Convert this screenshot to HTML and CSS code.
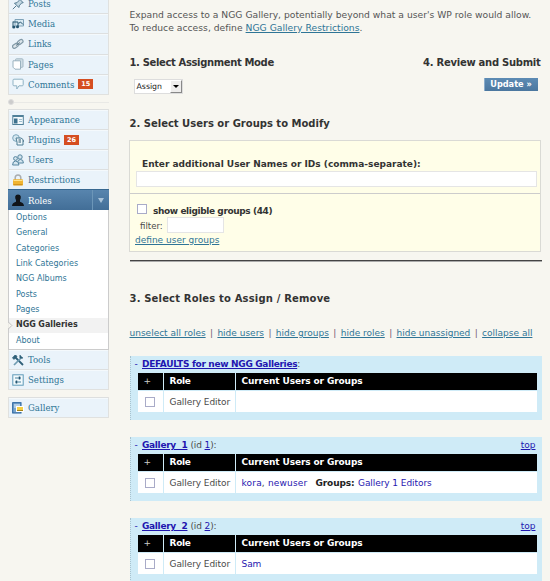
FILE: index.html
```html
<!DOCTYPE html>
<html lang="en">
<head>
<meta charset="utf-8">
<title>NGG Gallery Roles</title>
<link rel="stylesheet" href="styles.css">
</head>
<body>
<div class="page">
<aside class="sidebar">
  <ul class="menu menu-content">
    <li><svg viewBox="0 0 12 12"><path d="M.8 11.200L4 8" stroke="#52798f"/><path d="M2.500 5.200l4.300 4.300.7-2.300L9.800 5l1.400-.3L7.500 1l-.4 1.400L5 4.700z" fill="#c3d8e3" stroke="#52798f"/></svg>Posts</li>
    <li><svg viewBox="0 0 12 12"><path d="M3 1.500h8.500v6.500H3z" fill="#d8e9f2" stroke="#7fa3b8"/><path d="M1 3.500v5M1 4h5v4.500M6.500 5.500l2-1.500 2.500 2.500" fill="none" stroke="#24546f"/><circle cx="1.800" cy="9" r="1.600" fill="#24546f"/><circle cx="5.500" cy="8.800" r="1.500" fill="#24546f"/></svg>Media</li>
    <li><svg viewBox="0 0 12 12"><g fill="#dce5ea" stroke="#8199a7" stroke-width="1.200"><rect x=".5" y="6" width="6" height="3.600" rx="1.800" transform="rotate(-35 3.500 8)"/><rect x="5.200" y="2.200" width="6" height="3.600" rx="1.800" transform="rotate(-35 8.200 4)"/></g><path d="M4 7.500l4-3" stroke="#607d8d"/></svg>Links</li>
    <li><svg viewBox="0 0 12 12"><rect x="3.500" y=".8" width="7.500" height="8.500" rx="1" fill="#cfdde5" stroke="#a3b8c4"/><path d="M1 2.800h7.500v8.400H3L1 9.200z" fill="#fff" stroke="#9ab2bf"/></svg>Pages</li>
    <li><svg viewBox="0 0 12 12"><path d="M2 1.200h8.200q1 0 1 1v4.600q0 1-1 1H7L4.800 11V7.800H2q-1 0-1-1V2.200q0-1 1-1z" fill="#f5fafc" stroke="#8fb2c4"/></svg>Comments<b class="count">15</b></li>
  </ul>
  <div class="separator"><i></i></div>
  <ul class="menu">
    <li><svg viewBox="0 0 12 12"><rect x=".8" y="1.500" width="10.500" height="9" fill="#f3f9fc" stroke="#4f8099"/><path d="M1 2.500h10" stroke="#4f8099"/><path d="M2 4.500h3.500v5H2z" fill="#3c718e"/><path d="M7 5.500h3M7 7.500h3" stroke="#9fc0d0"/></svg>Appearance</li>
    <li><svg viewBox="0 0 12 12"><circle cx="4" cy="4" r="3.300" fill="#d5e8f1" stroke="#7ba5ba"/><path d="M4 4h5l2 1.500v5.500H5V8z" fill="#edf6fa" stroke="#4d7c94"/><path d="M6.500 6h2.500M6.500 8h2.500M11 7h1" stroke="#28566f"/></svg>Plugins<b class="count">26</b></li>
    <li><svg viewBox="0 0 12 12"><g fill="#d4e5ef" stroke="#5686a0"><circle cx="8" cy="3" r="2.200"/><path d="M5.500 9q0-3.500 3-3.500t2.900 3.500z"/><circle cx="3.500" cy="4.500" r="1.900"/><path d="M.6 11q0-4 3-4t3.400 4z"/></g></svg>Users</li>
    <li><svg viewBox="0 0 12 12"><path d="M3.200 6V3.700a2.800 2.800 0 0 1 5.600 0V6" fill="none" stroke="#a9adaf" stroke-width="1.500"/><rect x="1" y="5.300" width="10" height="6.200" rx=".8" fill="#f0b431"/><path d="M1.500 6.500h9" stroke="#ffe28a"/><path d="M1.500 10.700h9" stroke="#c98a1b"/></svg>Restrictions</li>
    <li class="current"><svg viewBox="0 0 12 12"><path d="M0 12q.2-3.300 4-4.300V6Q3 4.500 3.200 2.500 3.500.5 6 .5t2.800 2Q9 4.500 8 6v1.700q3.800 1 4 4.300z" fill="#101419"/></svg>Roles<span class="toggle"></span></li>
  </ul>
  <ul class="submenu">
    <li>Options</li><li>General</li><li>Categories</li><li>Link Categories</li><li>NGG Albums</li><li>Posts</li><li>Pages</li><li class="selected"><svg viewBox="0 0 5 10"><path d="M0 1l4 4-4 4" fill="#f7f6f0" stroke="#bbb"/></svg>NGG Galleries</li><li>About</li>
  </ul>
  <ul class="menu menu-tail">
    <li><svg viewBox="0 0 12 12"><path d="M2 2l9 9" stroke="#2f6079" stroke-width="1.800"/><path d="M10 3L2 11" stroke="#6f9cb2" stroke-width="1.700"/><path d="M.5 4l3-3L5 2.500 2 5.300zM8 1v3h3" fill="#2f6079" stroke="#2f6079"/></svg>Tools</li>
    <li><svg viewBox="0 0 12 12"><rect x=".8" y=".8" width="10.400" height="10.400" fill="#f3fafd" stroke="#5e9ab8"/><path d="M3 4h6M3 8h6" stroke="#47819e"/><path d="M7.500 2.500v3M4.500 6.500v3" stroke="#24546f" stroke-width="1.500"/></svg>Settings</li>
  </ul>
  <ul class="menu menu-gallery">
    <li><svg viewBox="0 0 12 12"><rect x=".7" y=".7" width="8.300" height="10.300" fill="#7aa6ce" stroke="#1f5c99"/><path d="M2 3h6M2 5h3" stroke="#eef6fb"/><rect x="4.500" y="4.500" width="7" height="5" fill="#f4cf45" stroke="#fff"/><path d="M5 8.500h6" stroke="#a78316"/></svg>Gallery</li>
  </ul>
</aside>

<main class="main">
  <p class="intro">Expand access to a NGG Gallery, potentially beyond what a user's WP role would allow.<br><span class="reduce">To reduce access, define <a>NGG Gallery Restrictions</a>.</span></p>
  <div class="steps">
    <div><h3 class="h-mode">1. Select Assignment Mode</h3><div class="select"><span>Assign</span><i></i></div></div>
    <div class="review"><h3 class="h-review">4. Review and Submit</h3><button>Update »</button></div>
  </div>
  <h3 class="h-users">2. Select Users or Groups to Modify</h3>
  <section class="picker">
    <div class="names"><label>Enter additional User Names or IDs (comma-separate):</label><div class="field"></div></div>
    <div class="groups">
      <div class="eligible"><i class="check"></i><b>show eligible groups (44)</b></div>
      <div class="filter"><span>filter:</span><div class="field"></div></div>
      <a>define user groups</a>
    </div>
  </section>
  <hr>
  <h3 class="h-roles">3. Select Roles to Assign / Remove</h3>
  <nav><a>unselect all roles</a><i>|</i><a>hide users</a><i>|</i><a>hide groups</a><i>|</i><a>hide roles</a><i>|</i><a>hide unassigned</a><i>|</i><a>collapse all</a></nav>

  <section class="gallery">
    <header><span class="dash">-</span><a class="name">DEFAULTS for new NGG Galleries</a>:</header>
    <div class="grid">
      <div class="th plus">+</div><div class="th">Role</div><div class="th wide">Current Users or Groups</div>
      <div class="td pick"><i class="check"></i></div><div class="td">Gallery Editor</div><div class="td"></div>
    </div>
  </section>
  <section class="gallery">
    <header><span class="dash">-</span><a class="name">Gallery&nbsp; 1</a><span class="id">(id <a>1</a>):</span><a class="top">top</a></header>
    <div class="grid">
      <div class="th plus">+</div><div class="th">Role</div><div class="th wide">Current Users or Groups</div>
      <div class="td pick"><i class="check"></i></div><div class="td">Gallery Editor</div><div class="td people"><span class="users"><em>kora</em>, <em>newuser</em></span><b>Groups:</b><em>Gallery 1 Editors</em></div>
    </div>
  </section>
  <section class="gallery">
    <header><span class="dash">-</span><a class="name">Gallery&nbsp; 2</a><span class="id">(id <a>2</a>):</span><a class="top">top</a></header>
    <div class="grid">
      <div class="th plus">+</div><div class="th">Role</div><div class="th wide">Current Users or Groups</div>
      <div class="td pick"><i class="check"></i></div><div class="td">Gallery Editor</div><div class="td people"><em>Sam</em></div>
    </div>
  </section>
</main>
</div>
</body>
</html>
```
FILE: styles.css
```css
* { box-sizing: border-box; }
body { margin: 0; background: #f7f6f0; color: #4a4a4a; font: 9px/12px "DejaVu Sans", sans-serif; }
ul { list-style: none; margin: 0; padding: 0; }
i, em { font-style: normal; }
svg { display: block; flex: none; }
.page { display: flex; width: 550px; height: 581px; overflow: hidden; }

.sidebar { width: 101px; margin-left: 8px; flex: none; }
.menu { border: 1px solid #e0e1df; border-top: 0; font: 9.5px/19px "DejaVu Serif Condensed", "DejaVu Serif", serif; color: #2f7596; }
.menu li { display: flex; align-items: center; height: 20px; background: #eaf3fa; border-top: 1px solid #dddfdf; padding-left: 3px; box-shadow: inset 0 1px #f4f9fc; }
.menu svg { width: 12px; height: 12px; margin-right: 4px; }
.menu-content { margin-top: -7px; height: 102px; }
.menu-content li { height: 20.2px; }
.count { width: 15px; height: 10px; margin-left: 4px; background: #d54e21; color: #fff; font: bold 6.5px/10px "DejaVu Sans", sans-serif; text-align: center; }
.separator { display: flex; align-items: center; height: 14px; }
.separator::after { content: ""; flex: 1; height: 1px; background: #e9e9e6; }
.separator i { width: 6px; height: 6px; border-radius: 3px; background: #ccc; border: 1px solid #ddd; }
.menu .current { height: 21px; margin: 0 -1px -1px; padding-left: 4px; background: linear-gradient(#5885ae, #426e97); color: #fff; border-top: 1px solid #36678f; box-shadow: none; }
.toggle { display: flex; align-items: center; justify-content: center; width: 17px; height: 20px; margin-left: auto; border-left: 1px solid #6c96b8; }
.toggle::after { content: ""; border: 3px solid transparent; border-top: 5px solid #a9c3d9; border-bottom: 0; }
.submenu { height: 140px; padding-top: .5px; border: 1px solid #ccc; border-top: 0; background: #fff; font-size: 8px; color: #2f7596; }
.submenu li { display: flex; align-items: center; height: 15.33px; padding-left: 7px; }
.submenu .selected { background: #f2f2f2; color: #333; font-weight: bold; letter-spacing: -.06px; padding-left: 0; }
.submenu svg { width: 5px; height: 9px; margin: 0 3px 0 -1px; }
.menu-tail li { height: 20px; }
.menu-tail li:first-child { height: 19px; border-top: 0; }
.menu-gallery { margin-top: 7px; }

.main { width: 412px; margin-left: 20.5px; flex: none; }
a { color: #2f7596; text-decoration: underline; }
.intro { margin: 9px 0 0; height: 26px; font-size: 9.2px; line-height: 12.8px; white-space: nowrap; color: #555; }
.reduce { letter-spacing: .02px; }
h3 { margin: 0; font-size: 10px; line-height: 14px; color: #333; white-space: nowrap; }
.steps { display: flex; justify-content: space-between; margin-top: 21px; height: 61px; }
.h-mode { letter-spacing: -.36px; }
.h-review { letter-spacing: -.27px; margin-right: 1px; }
.h-roles { letter-spacing: .17px; }
.select { display: flex; align-items: center; justify-content: space-between; width: 49px; height: 15px; margin: 9px 0 0 4px; padding: 0 0 0 2px; background: #fff; border: 1px solid #ddd; font-size: 7.8px; color: #222; }
.select i { width: 12px; height: 13px; background: #eeedec; border: 1px solid #fff; border-right-color: #888; border-bottom-color: #888; display: flex; align-items: center; justify-content: center; }
.select i::after { content: ""; border: 3px solid transparent; border-top: 3px solid #000; border-bottom: 0; }
.review { text-align: right; }
button { display: block; width: 54px; height: 13px; margin: 8px 4px 0 auto; padding: 0; border: 0; border-left: 1px solid #8aaccb; background: linear-gradient(#5d8bb4, #4b779f); color: #fff; font: bold 8.2px/13px "DejaVu Sans", sans-serif; }
.picker { margin: 9px 0 0 -.5px; width: 412px; height: 112px; border: 1px solid #dadad5; background: #fffee8; }
.names { height: 53px; padding: 17px 4px 0 7px; border-bottom: 1px solid #ccc; color: #333; font-weight: bold; }
.names label { display: block; height: 13px; padding-left: 5px; white-space: nowrap; }
.field { background: #fff; border: 1px solid #e5e5e5; }
.names .field { height: 16px; margin-left: -1px; margin-right: -1px; }
.groups { padding: 10px 0 0 5px; }
.eligible { display: flex; height: 13px; gap: 6px; padding-left: 2px; line-height: 15px; color: #333; }
.eligible b { letter-spacing: -.4px; }
.check { display: block; width: 10px; height: 10px; flex: none; background: #fff; border: 1px solid #a9abc8; }
.filter { display: flex; height: 15px; gap: 4px; padding-left: 5px; line-height: 19px; font-size: 8.6px; }
.filter .field { width: 57px; height: 16px; }
.groups > a { display: block; line-height: 16px; }
hr { height: 1px; margin: 8px 0 0; border: 0; background: #444; box-shadow: 0 1px #aaa; }
.h-roles { margin-top: 31px; }
nav { display: flex; justify-content: space-between; width: 403px; margin-top: 21px; white-space: nowrap; }
nav i { color: #735a72; }
.gallery { height: 64px; margin: 0 0 17px; padding: 1px 5px 0 4px; background: #cfebf7; border-left: 1px dotted #a9c3cf; }
nav + .gallery { margin-top: 17px; }
.gallery header { display: flex; height: 16px; line-height: 14px; white-space: nowrap; }
.gallery a, .gallery em, .dash { color: #1f16b0; }
.dash { width: 7.5px; }
.name { font-weight: bold; letter-spacing: -.31px; }
.id { margin-left: 3px; letter-spacing: -.12px; }
.top { margin-left: auto; margin-right: 1px; }
.grid { display: grid; grid-template-columns: 25px 71px 1fr; grid-template-rows: 17px 21px; column-gap: 1px; row-gap: 1px; margin-left: 3px; }
.th { background: #000; color: #fff; font-weight: bold; line-height: 17px; padding-left: 6px; letter-spacing: -.3px; }
.th.wide { letter-spacing: -.11px; }
.plus { font-weight: normal; color: #ccc; }
.td { background: #fff; line-height: 22px; height: 21px; padding-left: 6px; letter-spacing: -.07px; white-space: nowrap; }
.pick { padding: 6px 0 0 7px; }
.people { display: flex; }
.users { width: 74px; letter-spacing: .18px; }
.people b { width: 42.5px; color: #222; letter-spacing: -.11px; }
```
